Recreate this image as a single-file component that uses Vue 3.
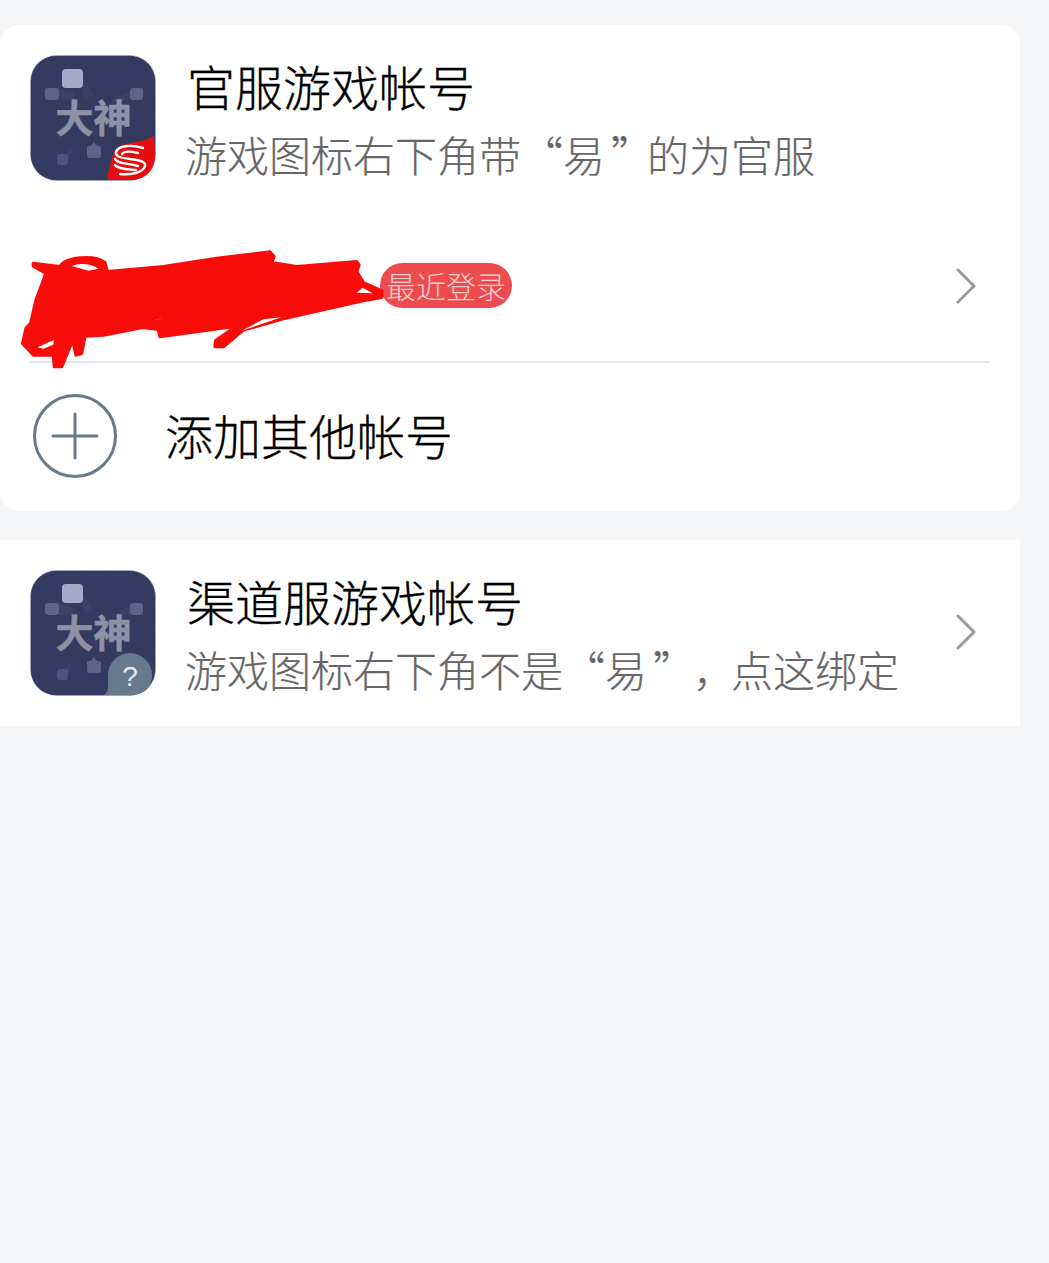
<template>
  <div class="page">
    <div class="card card-top">
      <div class="head">
        <svg class="app-icon" viewBox="0 0 126 126">
          <rect x="0.5" y="0.5" width="125" height="125" rx="26" fill="#343a60" stroke="#a4a8bc" stroke-width="1" stroke-dasharray="1.5 1.5" />
          <path d="M52 22 L64 40 L54 44 Z" fill="#3c4166" />
          <path d="M28 34 L44 38 L44 46 L28 45 Z" fill="#3c4166" />
          <path d="M100 36 L82 45 L84 48 L100 44 Z" fill="#3c4166" />
          <path d="M33 100 L44 90 L38 104 Z" fill="#3c4166" />
          <rect x="32" y="14" width="21" height="19" rx="4" fill="#a5aaca" />
          <rect x="15" y="33" width="14" height="12" rx="3" fill="#5f6387" />
          <rect x="100" y="33" width="13" height="12" rx="3" fill="#5f6387" />
          <path d="M57 92 L62 90 L64 87 L66 90 L71 92 L71 100 Q71 103 68 103 L60 103 Q57 103 57 100 Z" fill="#5f6387" />
          <rect x="27" y="99" width="11" height="11" rx="3" fill="#4f5378" />
          <text x="63.5" y="77" class="icon-text">大神</text>
          <path d="M77 125 C80 110 82 98 88 92 C95 87 112 88 124 81 L125 100 C125 116 115 125 100 125 Z" fill="#e60d0f" />
          <g fill="none" stroke="#fff" stroke-width="2.4" stroke-linecap="round">
            <path d="M113 93 C100 89 88 91 86 97 C85 102 92 103 100 104 C110 105 116 107 115 111 C113 118 100 120 90 119" />
            <path d="M108 98 C100 96 94 96 92 99" />
            <path d="M85 104 C88 109 97 108 108 111" />
            <path d="M85 110 C88 114 96 114 106 115" />
          </g>
        </svg>
        <div class="head-text">
          <div class="title">官服游戏帐号</div>
          <div class="sub">游戏图标右下角带“易<span class="quote-end">”</span>的为官服</div>
        </div>
      </div>
      <div class="account">
        <div class="name-mask"></div>
        <span class="tag">最近登录</span>
        <svg class="chevron" viewBox="0 0 20 36"><path d="M2 2 L18 18 L2 34" /></svg>
        <svg class="scribble" viewBox="0 0 1200 400">
          <path fill="#f80c0a" stroke="#f80c0a" stroke-width="10" stroke-linejoin="round" d="M70 70 L150 80 C165 52 250 42 285 68 L292 95 L460 80 L620 55 L780 36 L792 50 L785 68 L860 80 L1040 65 L1047 75 L1040 95 L1060 128 L1115 152 L1115 172 L1060 182 L820 236 L700 270 L640 320 L615 320 L617 302 L680 258 L450 290 L445 268 L398 262 L280 285 L225 288 L215 340 L198 345 L188 300 L155 380 L133 380 L130 345 L70 345 L38 310 L48 265 L62 250 L78 180 L108 100 L70 78 Z" />
          <path fill="#fff" d="M185 78 C205 68 245 70 265 86 L235 92 Z M82 322 L132 300 L130 314 L100 326 Z M1040 158 L1058 143 L1088 160 Z M695 272 L815 232 L760 238 Z M430 240 L460 234 L445 238 Z" />
        </svg>
      </div>
      <div class="add">
        <svg class="plus" viewBox="0 0 84 84">
          <circle cx="42" cy="42" r="40.5" />
          <path d="M20 42 H64 M42 20 V64" />
        </svg>
        <span class="title add-label">添加其他帐号</span>
      </div>
    </div>
    <div class="card card-other">
      <svg class="app-icon" viewBox="0 0 126 126">
        <rect x="0.5" y="0.5" width="125" height="125" rx="26" fill="#343a60" stroke="#a4a8bc" stroke-width="1" stroke-dasharray="1.5 1.5" />
        <path d="M52 22 L64 40 L54 44 Z" fill="#3c4166" />
        <path d="M28 34 L44 38 L44 46 L28 45 Z" fill="#3c4166" />
        <path d="M100 36 L82 45 L84 48 L100 44 Z" fill="#3c4166" />
        <path d="M33 100 L44 90 L38 104 Z" fill="#3c4166" />
        <rect x="32" y="14" width="21" height="19" rx="4" fill="#a5aaca" />
        <rect x="15" y="33" width="14" height="12" rx="3" fill="#5f6387" />
        <rect x="100" y="33" width="13" height="12" rx="3" fill="#5f6387" />
        <path d="M57 92 L62 90 L64 87 L66 90 L71 92 L71 100 Q71 103 68 103 L60 103 Q57 103 57 100 Z" fill="#5f6387" />
        <rect x="27" y="99" width="11" height="11" rx="3" fill="#4f5378" />
        <text x="63.5" y="77" class="icon-text">大神</text>
        <path d="M73 125 Q78 124 78 116 L78 105 A22 22 0 0 1 122 105 C122 116 116 125 100 125 Z" fill="#667a8c" />
        <text x="100" y="116" class="icon-q">?</text>
      </svg>
      <div class="head-text other-text">
        <div class="title">渠道服游戏帐号</div>
        <div class="sub">游戏图标右下角不是“易<span class="quote-end">”</span><span class="comma">，</span>点这绑定</div>
      </div>
      <svg class="chevron" viewBox="0 0 20 36"><path d="M2 2 L18 18 L2 34" /></svg>
    </div>
  </div>
</template>

<script setup>
</script>

<style>
body {
  background: #f5f6f8;
}
</style>

<style scoped>
.page {
  height: 1263px;
  padding-top: 25px;
  box-sizing: border-box;
  background: #f5f6f8;
  font-family: "Noto Sans CJK SC", "Noto Sans", sans-serif;
  overflow: hidden;
}

.card {
  width: 1020px;
  background: #fff;
}

.card-top {
  height: 486px;
  border-radius: 20px;
  display: flex;
  flex-direction: column;
}

.head {
  display: flex;
  padding: 30px 0 0 30px;
}

.app-icon {
  width: 126px;
  height: 126px;
  flex: none;
}

.icon-text {
  font-size: 38px;
  font-weight: 700;
  fill: #8e91a4;
  stroke: #8e91a4;
  stroke-width: 0.6px;
  text-anchor: middle;
}

.icon-q {
  font-family: "Liberation Sans", sans-serif;
  font-size: 28px;
  fill: #e4e8ec;
  text-anchor: middle;
}

.head-text {
  margin: -3px 0 0 31px;
}

.title {
  font-size: 48px;
  font-weight: 300;
  line-height: 66px;
  color: #000;
  -webkit-text-stroke: 0.3px #000;
}

.sub {
  font-size: 42px;
  font-weight: 300;
  line-height: 72px;
  color: #666;
  margin-left: -2px;
  -webkit-text-stroke: 0.2px #666;
}

.quote-end {
  display: inline-block;
  margin-left: 6px;
  letter-spacing: -6px;
}

.comma {
  display: inline-block;
  margin-left: 4px;
  letter-spacing: -4px;
}

.account {
  position: relative;
  display: flex;
  align-items: center;
  height: 141px;
  padding-bottom: 5px;
  margin: 25px 30px 0;
  border-bottom: 2px solid #e4e4e4;
}

.name-mask {
  width: 350px;
}

.tag {
  height: 45px;
  width: 132px;
  border-radius: 23px;
  background: #ee4b4f;
  color: #f9d0d2;
  font-size: 30px;
  font-weight: 300;
  line-height: 45px;
  text-align: center;
}

.chevron {
  width: 20px;
  height: 36px;
  margin-left: auto;
  flex: none;
  fill: none;
  stroke: #999;
  stroke-width: 3px;
  stroke-linecap: round;
  stroke-linejoin: round;
}

.account .chevron {
  margin-right: 14px;
}

.scribble {
  position: absolute;
  left: -20px;
  top: 25px;
  width: 400px;
  height: 133.33px;
}

.add {
  flex: 1;
  display: flex;
  align-items: center;
  padding: 0 0 2px 33px;
}

.add-label {
  margin-bottom: 4px;
}

.plus {
  width: 84px;
  height: 84px;
  margin-right: 48px;
  fill: none;
  stroke: #667a8c;
  stroke-width: 3px;
  stroke-linecap: round;
}

.card-other {
  height: 186px;
  margin-top: 29px;
  display: flex;
  align-items: center;
  padding-left: 30px;
  box-sizing: border-box;
}

.other-text {
  margin-top: 6px;
}

.card-other .chevron {
  margin: -2px 44px 0 auto;
}
</style>
